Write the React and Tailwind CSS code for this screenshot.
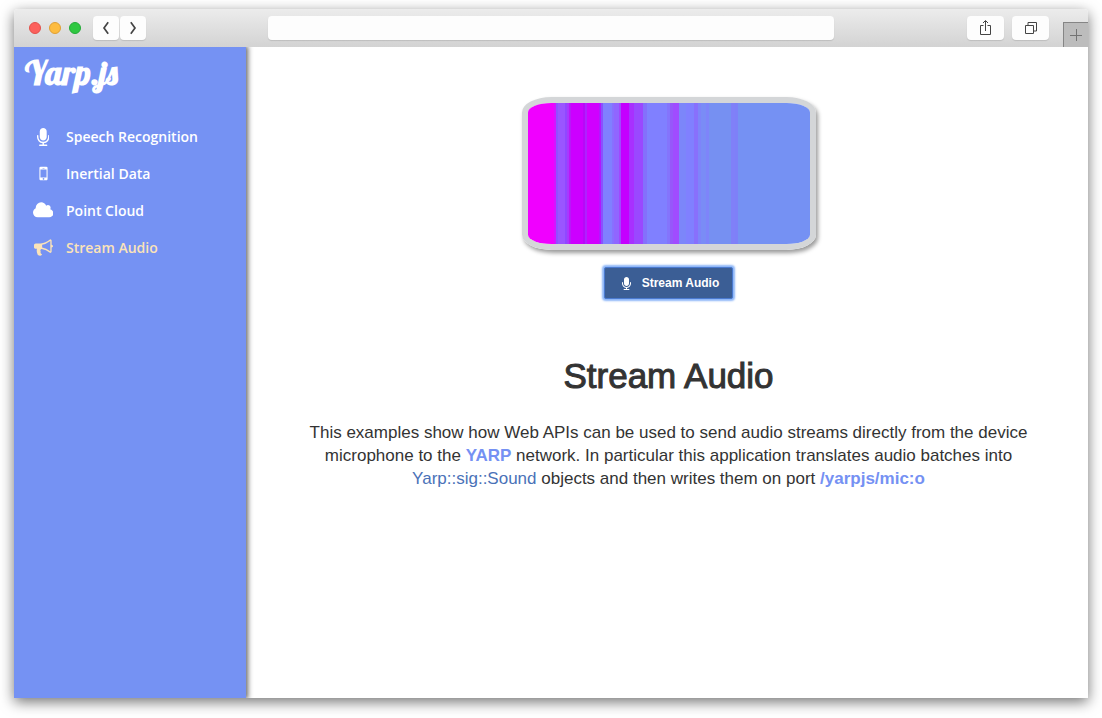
import React from "react";

const bands = [
  [0, 26, "#f000ff"], [26, 2, "#d414ff"], [28, 2, "#9050ff"], [30, 7, "#9a55ff"], [37, 2, "#9048ff"],
  [39, 2, "#a838ff"], [41, 2, "#b818f8"], [43, 12, "#cc00ff"], [55, 2, "#b808f8"], [57, 2, "#b020ff"],
  [59, 12, "#d000ff"], [71, 2, "#b018ff"], [73, 2, "#8a50ff"], [75, 9, "#8080ff"], [84, 2, "#8870ff"],
  [86, 5, "#9066ff"], [91, 2, "#a048ff"], [93, 8, "#c400ff"], [101, 5, "#a830ff"], [106, 9, "#9a48ff"],
  [115, 4, "#8470fc"], [119, 20, "#8080ff"], [139, 3, "#8474fc"],
  [142, 3, "#9658fa"], [145, 6, "#a04cff"], [151, 7, "#7c86fa"], [158, 8, "#8080ff"], [166, 4, "#8870fc"],
  [170, 3, "#7e84fa"], [173, 5, "#7a8cf6"], [178, 3, "#7e84fa"], [181, 22, "#7690f2"], [203, 4, "#8080f8"],
  [207, 3, "#7e80f8"], [210, 72, "#7591f3"],
];

const MIC = "M1152 704v128q0 221-147.5 384.5t-364.5 187.5v132h256q26 0 45 19t19 45-19 45-45 19h-640q-26 0-45-19t-19-45 19-45 45-19h256v-132q-217-24-364.5-187.5t-147.5-384.5v-128q0-26 19-45t45-19 45 19 19 45v128q0 185 131.5 316.5t316.5 131.5 316.5-131.5 131.5-316.5v-128q0-26 19-45t45-19 45 19 19 45zm-256-384v512q0 132-94 226t-226 94-226-94-94-226v-512q0-132 94-226t226-94 226 94 94 226z";
const MOBILE = "M976 1408q0-33-23.5-56.5t-56.5-23.5-56.5 23.5-23.5 56.5 23.5 56.5 56.5 23.5 56.5-23.5 23.5-56.5zm208-160v-704q0-13-9.5-22.5t-22.5-9.5h-512q-13 0-22.5 9.5t-9.5 22.5v704q0 13 9.5 22.5t22.5 9.5h512q13 0 22.5-9.5t9.5-22.5zm-192-848q0-16-16-16h-160q-16 0-16 16t16 16h160q16 0 16-16zm288-16v1024q0 52-38 90t-90 38h-512q-52 0-90-38t-38-90v-1024q0-52 38-90t90-38h512q52 0 90 38t38 90z";
const CLOUD = "M1984 1152q0 159-112.5 271.5t-271.5 112.5h-1088q-185 0-316.5-131.5t-131.5-316.5q0-132 71-241.5t187-163.5q-2-28-2-43 0-212 150-362t362-150q158 0 286.5 88t187.5 230q70-62 166-62 106 0 181 75t75 181q0 75-41 138 129 30 213 134.5t84 239.5z";
const HORN = "M1664 640q53 0 90.5 37.5t37.5 90.5-37.5 90.5-90.5 37.5v384q0 52-38 90t-90 38q-417-347-812-380-58 19-91 66t-31 100.5 40 92.5q-20 33-23 65.5t6 58 33.5 55 48 50 61.5 50.5q-29 58-111.5 83t-168.5 11.5-132-55.5q-7-23-29.5-87.5t-32-94.5-23-89-15-101 3.5-98.5 22-110.5h-122q-66 0-113-47t-47-113v-192q0-66 47-113t113-47h480q435 0 896-384 52 0 90 38t38 90v384zm-128 604v-954q-394 302-768 343v270q377 42 768 341z";

const nav = [
  { label: "Speech Recognition", d: MIC, box: "0 0 1152 1664", size: "h-[18px]" },
  { label: "Inertial Data", d: MOBILE, box: "0 0 1792 1792", size: "h-[19px]" },
  { label: "Point Cloud", d: CLOUD, box: "64 0 1920 1792", size: "h-[19px]" },
  { label: "Stream Audio", d: HORN, box: "0 0 1792 1792", size: "h-[19px]", active: true },
];

function Glyph({ d, box, className }) {
  return (
    <svg viewBox={box} fill="currentColor" className={className} aria-hidden="true">
      <path d={d} />
    </svg>
  );
}

function Toolbar() {
  const button = "flex h-6 items-center justify-center rounded bg-[#fdfdfd] text-[#444] shadow-[0_1px_1px_rgba(0,0,0,0.12)]";
  return (
    <header className="flex h-[38px] shrink-0 items-center rounded-t bg-linear-to-b from-[#ececec] to-[#d3d3d3]">
      <div className="flex flex-1 items-center">
        <div className="flex gap-2 pl-[15px]">
          <span className="size-3 rounded-full border border-[#e2514b] bg-[#fc605c]" />
          <span className="size-3 rounded-full border border-[#dfa035] bg-[#fdbc40]" />
          <span className="size-3 rounded-full border border-[#24aa38] bg-[#2fc841]" />
        </div>
        <div className="ml-3 flex gap-px">
          <button aria-label="Back" className={button + " w-[26px]"}>
            <svg viewBox="0 0 8 14" className="h-3.5 w-2" fill="none" stroke="currentColor" strokeWidth="1.7"><path d="M6.2 1.2 2 7l4.2 5.8" /></svg>
          </button>
          <button aria-label="Forward" className={button + " w-[26px]"}>
            <svg viewBox="0 0 8 14" className="h-3.5 w-2" fill="none" stroke="currentColor" strokeWidth="1.7"><path d="M1.8 1.2 6 7l-4.2 5.8" /></svg>
          </button>
        </div>
      </div>
      <input aria-label="Address" className="h-6 w-[53%] max-w-[566px] rounded bg-[#fdfdfd] px-2 text-xs shadow-[0_1px_1px_rgba(0,0,0,0.12)] outline-none" />
      <div className="flex flex-1 items-center justify-end self-stretch">
        <button aria-label="Share" className={button + " mr-2 w-[37px]"}>
          <svg viewBox="0 0 13 18" className="h-[18px] w-[13px]" fill="none" stroke="currentColor"><path d="M4.5 6.5h-3v9h10v-9h-3M6.5 12V2M4 4l2.500-2.500L9 4" /></svg>
        </button>
        <button aria-label="Show tabs" className={button + " mr-3.5 w-[37px]"}>
          <svg viewBox="0 0 14 14" className="size-3.5" fill="none" stroke="currentColor"><path d="M1.500 4.500h8v8h-8zM4 4V1.500h8.500v8.500H10" /></svg>
        </button>
        <button aria-label="New tab" className="flex h-[25px] w-[25px] items-center justify-center self-end border-t border-l border-[#858585] bg-[#bcbcbc] text-[#737373]">
          <svg viewBox="0 0 12 12" className="size-3" fill="none" stroke="currentColor"><path d="M0 6.500h12M6.500 0v12" /></svg>
        </button>
      </div>
    </header>
  );
}

export default function App() {
  return (
    <div className="flex min-h-screen flex-col bg-white px-3.5 pt-[9px] pb-5 font-['Liberation_Sans',sans-serif]">
      <div className="flex flex-1 flex-col rounded-t shadow-[0_4px_14px_rgba(0,0,0,0.55)]">
        <Toolbar />
        <div className="flex flex-1 bg-white">
          <aside className="w-[232px] shrink-0 bg-[#7592f3] text-white shadow-[1px_0_5px_1px_rgba(0,0,0,0.6)] [clip-path:inset(0_-8px_0_0)]">
            <div className="h-[71px] pt-1 pl-[11px] font-[Lobster,'Liberation_Serif',serif] text-[33px] leading-[44px] font-bold">Yarp.js</div>
            <nav className="flex flex-col font-['Open_Sans',sans-serif] text-[14px] font-semibold">
              {nav.map((item) => (
                <a
                  key={item.label}
                  href="#"
                  aria-current={item.active ? "page" : undefined}
                  className={"flex h-[37px] items-center gap-3 pl-[18px] " + (item.active ? "text-[#fbe3b8]" : "text-white")}
                >
                  <span className="flex w-[22px] justify-center">
                    <Glyph d={item.d} box={item.box} className={item.size} />
                  </span>
                  {item.label}
                </a>
              ))}
            </nav>
          </aside>
          <main className="flex min-w-0 flex-1 flex-col items-center pt-[50px] pr-12 pl-[51px] text-center text-[#333]">
            <div className="h-[153px] w-[294px] overflow-hidden rounded-[10%] border-6 border-[#d4d6d8] shadow-[2px_3px_4px_rgba(0,0,0,0.4)]">
              <svg viewBox="0 0 282 141" preserveAspectRatio="none" className="size-full" role="img" aria-label="Audio levels">
                {bands.map(([x, w, fill]) => (
                  <rect key={x} x={x} width={w} height="141" fill={fill} />
                ))}
              </svg>
            </div>
            <button className="mt-[17px] flex h-8 w-[129px] items-center justify-center gap-[11px] rounded-xs border border-[#4a7ad0] bg-[#3b5e95] pl-1 text-[12px] font-bold text-white shadow-[0_0_2px_2px_#8db6f8]">
              <Glyph d={MIC} box="0 0 1152 1664" className="h-[13px]" />
              Stream Audio
            </button>
            <h1 className="mt-[57px] text-[35px] leading-10 font-normal [-webkit-text-stroke:1px_#333]">Stream Audio</h1>
            <p className="mt-[25px] max-w-[740px] text-[17px] leading-[23px]">
              This examples show how Web APIs can be used to send audio streams directly from the device microphone to the{" "}
              <a href="#" className="font-bold text-[#7591f3]">YARP</a> network. In particular this application translates audio batches into{" "}
              <a href="#" className="text-[#4a72b8]">Yarp::sig::Sound</a> objects and then writes them on port{" "}
              <strong className="font-bold text-[#7591f3]">/yarpjs/mic:o</strong>
            </p>
          </main>
        </div>
      </div>
    </div>
  );
}
